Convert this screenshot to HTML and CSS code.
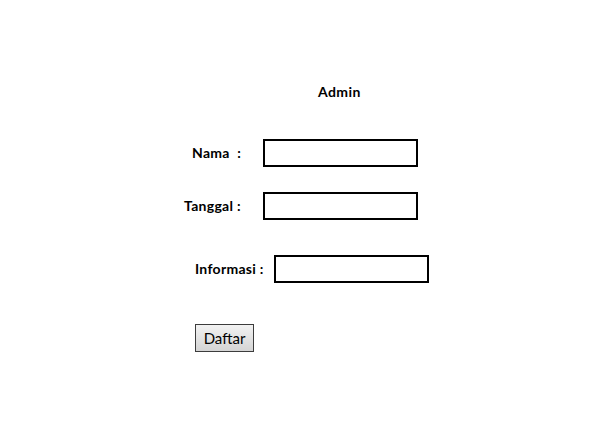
FILE: index.html
```html
<!DOCTYPE html>
<html>
<head>
<meta charset="utf-8">
<link rel="stylesheet" href="styles.css">
</head>
<body>
<div class="page">
  <div class="title">Admin</div>
  <form class="form">
    <div class="row row-nama">
      <label class="label">Nama&nbsp; :</label>
      <input class="field" type="text">
    </div>
    <div class="row row-tanggal">
      <label class="label">Tanggal :</label>
      <input class="field" type="text">
    </div>
    <div class="row row-info">
      <label class="label">Informasi :</label>
      <input class="field" type="text">
    </div>
    <div class="row row-btn">
      <button class="btn" type="button">Daftar</button>
    </div>
  </form>
</div>
</body>
</html>
```
FILE: styles.css
```css
html, body {
  margin: 0;
  padding: 0;
  background: #fff;
}
.page {
  width: 614px;
  height: 425px;
  font-family: Lato, "Open Sans", sans-serif;
  color: #000;
}
.title {
  padding-top: 83px;
  padding-left: 318px;
  font-weight: bold;
  font-size: 14px;
  letter-spacing: 0.4px;
  line-height: 18px;
}
.form {
  display: flex;
  flex-direction: column;
  margin: 0;
}
.row {
  display: flex;
  align-items: center;
}
.label {
  flex: none;
  font-weight: bold;
  font-size: 14px;
  letter-spacing: 0.3px;
  line-height: 18px;
}
.field {
  box-sizing: border-box;
  width: 155px;
  height: 28px;
  border: 2px solid #000;
  margin: 0;
  padding: 0;
  background: #fff;
  outline: none;
}
.row-nama {
  margin-top: 38px;
  padding-left: 192px;
}
.row-nama .label { width: 71px; }
.row-tanggal {
  margin-top: 25px;
  padding-left: 184px;
}
.row-tanggal .label { width: 79px; }
.row-info {
  margin-top: 35px;
  padding-left: 195px;
}
.row-info .label { width: 79px; }
.row-btn {
  margin-top: 41px;
  padding-left: 195px;
}
.btn {
  box-sizing: border-box;
  width: 59px;
  height: 28px;
  margin: 0;
  padding: 0;
  border: 1px solid #3c3c3c;
  border-radius: 0;
  background: linear-gradient(#f2f2f2, #d4d4d4);
  font-family: Lato, "Open Sans", sans-serif;
  font-size: 15px;
  color: #000;
}
```
